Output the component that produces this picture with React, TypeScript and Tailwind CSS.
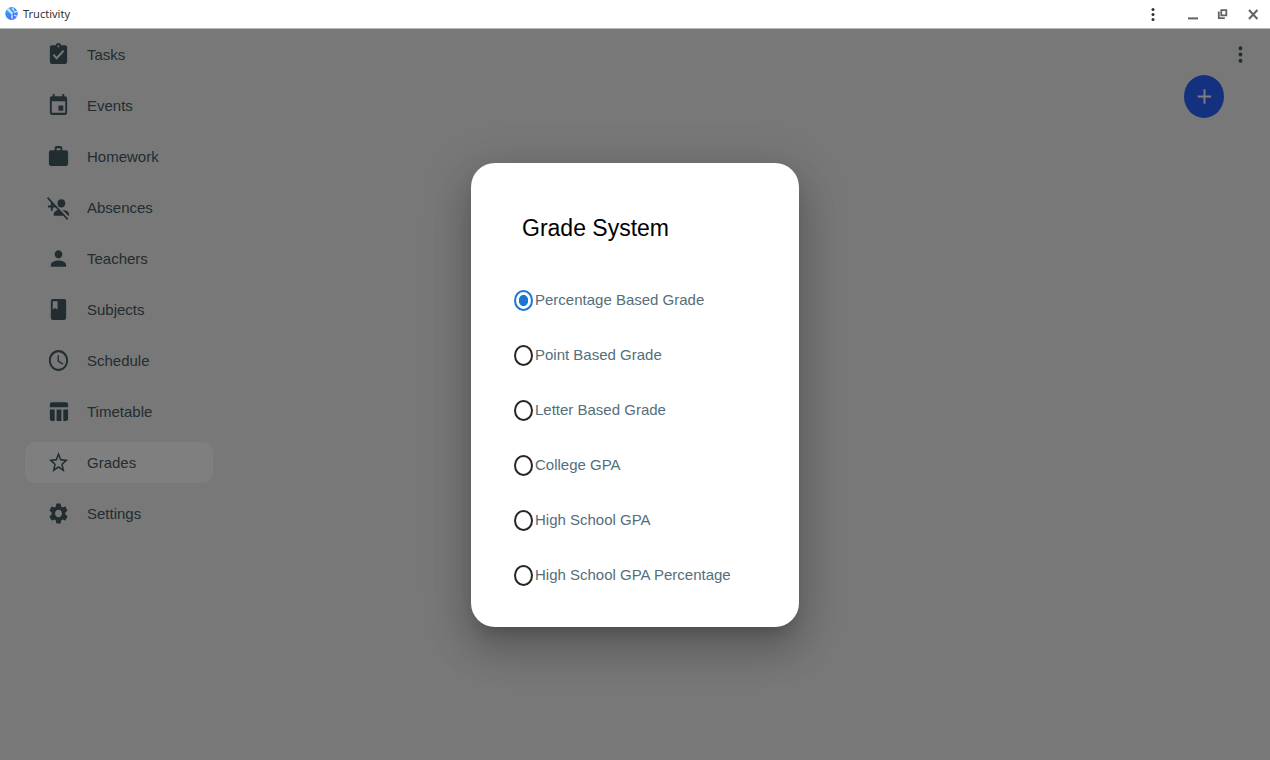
import { useState } from "react";
import type { IconType } from "react-icons";
import {
  MdAdd,
  MdAssignmentTurnedIn,
  MdClass,
  MdEvent,
  MdMoreVert,
  MdPerson,
  MdPersonAddDisabled,
  MdSchedule,
  MdSettings,
  MdStarBorder,
  MdTableChart,
  MdWork,
} from "react-icons/md";

const navItems: { label: string; icon: IconType }[] = [
  { label: "Tasks", icon: MdAssignmentTurnedIn },
  { label: "Events", icon: MdEvent },
  { label: "Homework", icon: MdWork },
  { label: "Absences", icon: MdPersonAddDisabled },
  { label: "Teachers", icon: MdPerson },
  { label: "Subjects", icon: MdClass },
  { label: "Schedule", icon: MdSchedule },
  { label: "Timetable", icon: MdTableChart },
  { label: "Grades", icon: MdStarBorder },
  { label: "Settings", icon: MdSettings },
];

const gradeSystems = [
  "Percentage Based Grade",
  "Point Based Grade",
  "Letter Based Grade",
  "College GPA",
  "High School GPA",
  "High School GPA Percentage",
];

function Logo() {
  return (
    <svg viewBox="0 0 26 28" className="h-[14px] w-[13px]" aria-hidden="true">
      <defs>
        <linearGradient id="globe" x1="0" y1="0" x2="0.6" y2="1">
          <stop offset="0" stopColor="#35c0f4" />
          <stop offset="0.5" stopColor="#3d8cf8" />
          <stop offset="1" stopColor="#4a6cf8" />
        </linearGradient>
      </defs>
      <ellipse cx="13" cy="13" rx="12.5" ry="13" fill="url(#globe)" />
      <path d="M3 5l4-3 9 10-2 4zM13 2l5 1 1 6-3-2zM17 9l8-2v3l-7 2zM13 15l3 2-1 8-3-4zM18 15l6 2-1 3-5-3z" fill="#cfe6ff" />
    </svg>
  );
}

function TitleBar() {
  return (
    <header className="flex h-[29px] shrink-0 items-center justify-between border-b border-[#b5b7b5] bg-white pr-[10px] pl-[5px]">
      <div className="flex items-center gap-[5px]">
        <Logo />
        <span className="font-['Noto_Sans',sans-serif] text-[11px] leading-4 text-[#333]">Tructivity</span>
      </div>
      <div className="flex items-center gap-4 text-[#5f6368]">
        <button type="button" aria-label="App menu" className="mr-[10px] text-[#303134]">
          <svg viewBox="0 0 14 14" className="size-[14px]" fill="currentColor">
            <circle cx="7" cy="2.5" r="1.5" />
            <circle cx="7" cy="7.5" r="1.5" />
            <circle cx="7" cy="12.5" r="1.5" />
          </svg>
        </button>
        <button type="button" aria-label="Minimize">
          <svg viewBox="0 0 14 14" className="size-[14px]">
            <path d="M2 11.4h10" fill="none" stroke="currentColor" strokeWidth="2" />
          </svg>
        </button>
        <button type="button" aria-label="Restore">
          <svg viewBox="0 0 14 14" className="size-[14px]" fill="none" stroke="currentColor">
            <path d="M5.3 3.2h5v5.2h-5z" strokeWidth="1.8" />
            <path d="M2.8 4.6v6.6h6" strokeWidth="1.8" />
          </svg>
        </button>
        <button type="button" aria-label="Close">
          <svg viewBox="0 0 14 14" className="size-[14px]">
            <path d="M3 3l8.4 9M11.4 3L3 12" fill="none" stroke="currentColor" strokeWidth="2" />
          </svg>
        </button>
      </div>
    </header>
  );
}

function Sidebar() {
  return (
    <nav aria-label="Main" className="w-[240px] shrink-0 px-[25px] pt-[5px]">
      <ul className="flex flex-col gap-[10px]">
        {navItems.map(({ label, icon: Icon }) => (
          <li key={label} className="pr-[2px]">
            <a
              href={"#" + label.toLowerCase()}
              aria-current={label === "Grades" ? "page" : undefined}
              className="flex h-[41px] items-center gap-[17px] rounded-[10px] pl-[22px] text-[15px] leading-5 text-[#455a64] aria-[current=page]:bg-white"
            >
              <Icon preserveAspectRatio="none" className="h-[25px] w-[23px]" />
              {label}
            </a>
          </li>
        ))}
      </ul>
    </nav>
  );
}

function GradeSystemDialog() {
  const [selected, setSelected] = useState(gradeSystems[0]);
  return (
    <div
      role="dialog"
      aria-modal="true"
      aria-labelledby="grade-system-title"
      className="w-[328px] rounded-[24px] bg-white px-[43px] pt-[51px] pb-[24px] shadow-[0_11px_15px_-7px_rgba(0,0,0,0.2),0_24px_38px_3px_rgba(0,0,0,0.14),0_9px_46px_8px_rgba(0,0,0,0.12)]"
    >
      <h2 id="grade-system-title" className="pl-2 text-[23px] leading-7 text-black">
        Grade System
      </h2>
      <div role="radiogroup" aria-labelledby="grade-system-title" className="mt-[31px]">
        {gradeSystems.map((name) => (
          <label key={name} className="flex h-[55px] cursor-pointer items-center gap-[2px] text-[15px] leading-5 whitespace-nowrap text-[#546e7a]">
            <input
              type="radio"
              name="grade-system"
              value={name}
              checked={selected === name}
              onChange={() => setSelected(name)}
              className="h-[21px] w-[19px] shrink-0 appearance-none rounded-[50%] border-2 border-[#262626] bg-white checked:border-[#1976d2] checked:bg-[radial-gradient(ellipse_5px_6px,#1976d2_86%,transparent_100%)]"
            />
            {name}
          </label>
        ))}
      </div>
    </div>
  );
}

export default function App() {
  return (
    <div className="flex min-h-screen flex-col bg-[#f0f0f0] font-['Liberation_Sans',Arial,sans-serif]">
      <TitleBar />
      <div className="relative flex grow">
        <Sidebar />
        <main className="flex grow flex-col items-end pt-[13px]">
          <button type="button" aria-label="More options" className="mr-[18px] text-[#455a64]">
            <MdMoreVert preserveAspectRatio="none" className="h-[25px] w-[23px]" />
          </button>
          <button
            type="button"
            aria-label="Add grade"
            className="mt-2 mr-[46px] flex h-[43px] w-[40px] items-center justify-center rounded-[50%] bg-[#2962ff] text-white"
          >
            <MdAdd preserveAspectRatio="none" className="h-[25px] w-[23px]" />
          </button>
        </main>
        <div className="absolute inset-0 flex items-center justify-center bg-black/50">
          <GradeSystemDialog />
        </div>
      </div>
    </div>
  );
}
